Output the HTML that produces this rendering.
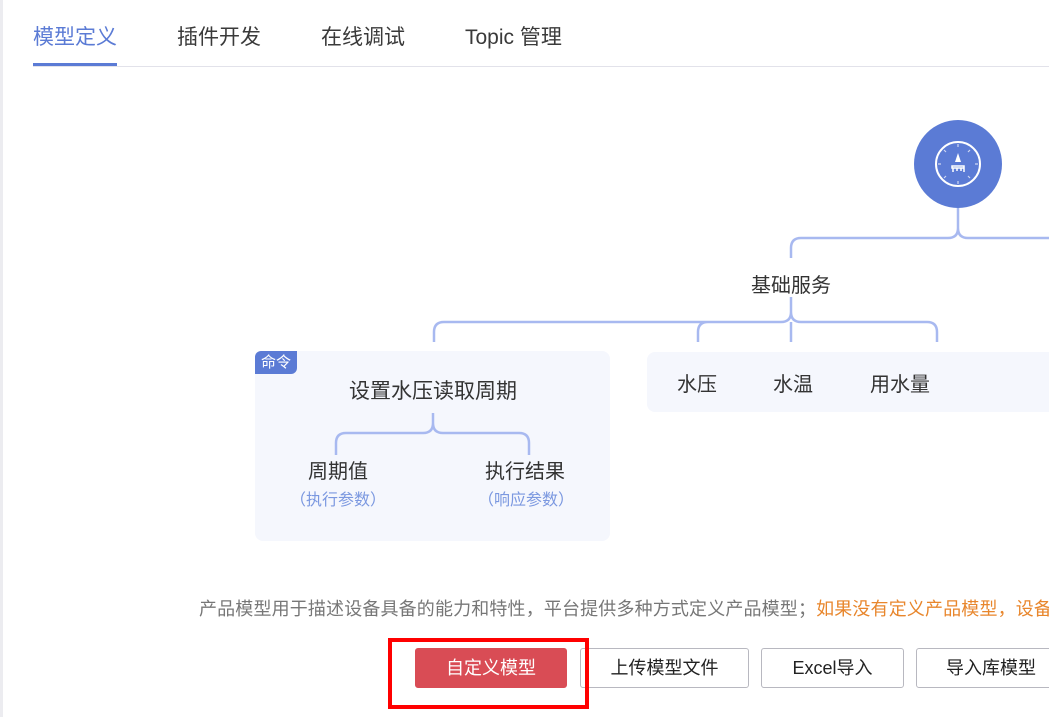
<!DOCTYPE html>
<html><head><meta charset="utf-8"><style>
body{margin:0;width:1049px;height:717px;overflow:hidden;background:#fff;font-family:"Liberation Sans","Noto Sans CJK SC",sans-serif;position:relative;color:#333}
.a{position:absolute;white-space:nowrap}
.tab{top:21px;font-size:21px;color:#3a3a3a}
.btn{position:absolute;top:648px;height:40px;border:1px solid #b8b8c0;border-radius:3px;box-sizing:border-box;font-size:18px;line-height:38px;text-align:center;background:#fff;color:#222}
.t{font-size:20px;color:#333}
</style></head><body>
<div class="a" style="left:0;top:0;width:3px;height:717px;background:#ececf0"></div>
<div class="a tab" style="left:33px;color:#5b7bd5">模型定义</div>
<div class="a tab" style="left:177px">插件开发</div>
<div class="a tab" style="left:321px">在线调试</div>
<div class="a tab" style="left:465px">Topic 管理</div>
<div class="a" style="left:33px;top:66px;width:1016px;height:1px;background:#e2e2ea"></div>
<div class="a" style="left:33px;top:63px;width:84px;height:3px;background:#5b7bd5"></div>

<div class="a" style="left:255px;top:351px;width:355px;height:190px;background:#f5f7fd;border-radius:8px"></div>
<div class="a" style="left:255px;top:351px;width:42px;height:23px;background:#5b7bd5;border-radius:6px 0 6px 0;color:#fff;font-size:15px;line-height:23px;text-align:center">命令</div>
<div class="a" style="left:647px;top:352px;width:420px;height:60px;background:#f5f7fd;border-radius:8px"></div>

<svg class="a" style="left:0;top:0" width="1049" height="717">
<circle cx="958" cy="164" r="44" fill="#5b7bd5"/>
<circle cx="958" cy="164" r="22" fill="none" stroke="#fff" stroke-width="2"/>
<g stroke="#fff" stroke-width="1.2" opacity=".7"><path d="M958 144v3M958 181v3M938 164h3M975 164h3M944 150l2 2M970 150l-2 2M944 178l2-2M970 178l-2-2"/></g>
<path d="M958 153l-3 9h6z" fill="#fff"/><path d="M952 166h12v2h-12zM953 168v4M957 168v3M961 168v3M964 168v4" stroke="#fff" stroke-width="1.5" fill="none"/>
<g fill="none" stroke="#a8b9f0" stroke-width="2.5">
<path d="M958 208v20q0 10 -10 10h-147q-10 0 -10 10v10M958 228q0 10 10 10h90"/>
<path d="M791 297v15q0 10 -10 10h-337q-10 0 -10 10v10M791 312q0 10 10 10h126q10 0 10 10v10M791 322v20M698 342v-10q0-10 10-10"/>
<path d="M433 413v10q0 10 -10 10h-77q-10 0 -10 10v12M433 423q0 10 10 10h76q10 0 10 10v12"/>
</g>
</svg>

<div class="a t" style="left:751px;top:269px">基础服务</div>
<div class="a t" style="left:349px;top:375px;font-size:21px">设置水压读取周期</div>
<div class="a t" style="left:308px;top:455px">周期值</div>
<div class="a t" style="left:485px;top:455px">执行结果</div>
<div class="a" style="left:290px;top:486px;font-size:16px;color:#7b98e0">（执行参数）</div>
<div class="a" style="left:478px;top:486px;font-size:16px;color:#7b98e0">（响应参数）</div>
<div class="a t" style="left:677px;top:368px">水压</div>
<div class="a t" style="left:773px;top:368px">水温</div>
<div class="a t" style="left:870px;top:368px">用水量</div>

<div class="a" style="left:199px;top:595px;font-size:18px;letter-spacing:0.15px;color:#777">产品模型用于描述设备具备的能力和特性，平台提供多种方式定义产品模型；<span style="color:#e8862c">如果没有定义产品模型，设备</span></div>

<div class="btn" style="left:415px;width:152px;background:#d94c55;border-color:#d94c55;color:#fff">自定义模型</div>
<div class="btn" style="left:580px;width:169px">上传模型文件</div>
<div class="btn" style="left:761px;width:143px">Excel导入</div>
<div class="btn" style="left:916px;width:150px">导入库模型</div>
<div class="a" style="left:388px;top:638px;width:201px;height:71px;border:4px solid #f00;box-sizing:border-box"></div>
</body></html>
